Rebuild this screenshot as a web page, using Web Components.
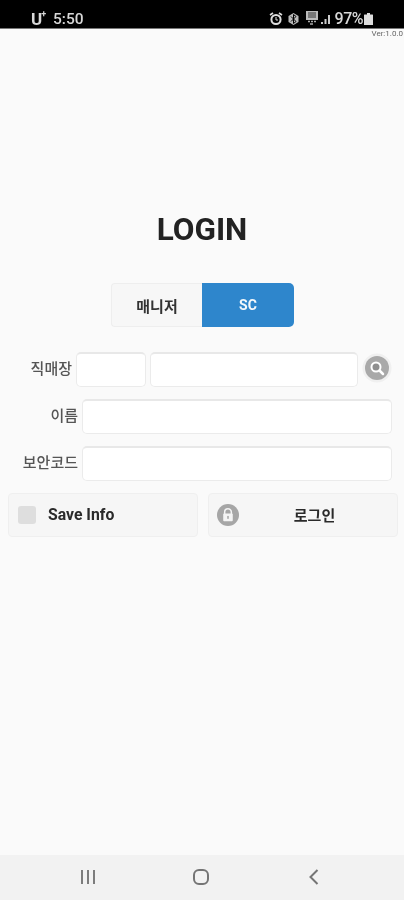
<!DOCTYPE html>
<html lang="ko">
<head>
<meta charset="utf-8">
<title>LOGIN</title>
<style>
html, body { margin: 0; height: 100%; }
body { background: #fafafa; font-family: Roboto, "Noto Sans CJK KR", sans-serif; }
#app { height: 900px; display: flex; flex-direction: column; overflow: hidden; }
</style>
</head>
<body>
<div id="app">
  <status-bar></status-bar>
  <login-page></login-page>
  <nav-bar></nav-bar>
</div>
<script>
const FONT = 'Roboto, "Noto Sans CJK KR", sans-serif';

class StatusBar extends HTMLElement {
  connectedCallback() {
    this.attachShadow({ mode: "open" }).innerHTML = `
    <style>
      :host { display: flex; flex: none; height: 29px; box-sizing: border-box; background: #000; color: #d8d8d8;
        align-items: center; padding: 9px 31px 0 31px; border-bottom: 1px solid #777; font-family: ${FONT}; filter: blur(.5px); }
      .carrier { font-size: 17px; font-weight: 700; width: 22px; letter-spacing: -1px; }
      .carrier sup { font-size: 9px; line-height: 0; position: relative; top: -1px; }
      .time { font-size: 15.5px; font-weight: 500; }
      .right { margin-left: auto; display: flex; align-items: center; }
      .pct { font-size: 16px; letter-spacing: -.5px; font-weight: 500; margin: 0 1px 0 4px; }
      .alarm { margin-right: 4px; }
      .bt { margin-right: 6px; }
      svg { display: block; }
    </style>
    <span class="carrier">U<sup>+</sup></span><span class="time">5:50</span>
    <div class="right">
      <svg class="alarm" width="14" height="14" viewBox="0 0 14 14"><circle cx="7" cy="7.500" r="4.600" fill="none" stroke="#ddd" stroke-width="2"/><path d="M1 3l3-2M13 3l-3-2" stroke="#ddd" stroke-width="1.600"/><path d="M7 5v3h2" stroke="#ddd" fill="none"/></svg>
      <svg class="bt" width="13" height="14" viewBox="0 0 13 14"><path d="M6.500 1l5 3v6l-5 3-5-3V4z" fill="#bbb"/><path d="M4 4.500l5 5-2.500 2v-9L9 4.500l-5 5" fill="none" stroke="#000"/></svg>
      <svg width="25" height="15" viewBox="0 0 25 15"><rect x="0" y="0" width="12" height="9" fill="#bbb"/><path d="M2 2h8M2 4h8M2 6h8" stroke="#333"/><path d="M2 10.500h2M5 10.500h2M8 10.500h2M4 13h3" stroke="#aaa" stroke-width="1.500"/><path d="M15 11h2v2h-2zM18.500 8h2v5h-2zM22 4h2v9h-2z" fill="#ccc"/></svg>
      <span class="pct">97%</span>
      <svg width="9" height="12" viewBox="0 0 9 12"><path d="M3 0h3v1.500H8.500a.5.500 0 0 1 .5.500v10H0V2a.5.500 0 0 1 .5-.500H3z" fill="#ddd"/></svg>
    </div>`;
  }
}

class SegmentToggle extends HTMLElement {
  connectedCallback() {
    this.attachShadow({ mode: "open" }).innerHTML = `
    <style>
      :host { display: flex; width: 183px; height: 44px; font: 700 15px ${FONT}; }
      div { flex: 1; display: flex; align-items: center; justify-content: center; box-sizing: border-box; }
      .off { flex: none; width: 91px; background: #f7f7f7; color: #333; border: 1px solid #eee; border-right: 0; border-radius: 4px 0 0 4px; }
      .on { background: #2e86cc; color: #f4f8fb; font-size: 14px; border-radius: 0 5px 5px 0; }
    </style>
    <div class="off">매니저</div><div class="on">SC</div>`;
  }
}

class FieldRow extends HTMLElement {
  connectedCallback() {
    this.attachShadow({ mode: "open" }).innerHTML = `
    <style>
      :host { display: flex; align-items: center; gap: 4px; color: #555; font: 500 15px ${FONT}; }
      label { flex: none; width: var(--label-width, 78px); text-align: right; white-space: nowrap; padding-bottom: 4px; }
    </style>
    <label>${this.getAttribute("label")}</label><slot></slot>`;
  }
}

class TextBox extends HTMLElement {
  connectedCallback() {
    this.attachShadow({ mode: "open" }).innerHTML = `
    <style>
      :host { display: block; flex: 1 1 0; min-width: 0; }
      input { display: block; box-sizing: border-box; width: 100%; height: 35px; margin: 0; padding: 0 8px;
        background: #fff; border: 1px solid #ebebeb; border-top: 2px solid #e8e8e8; border-radius: 5px; outline: 0; }
    </style>
    <input type="text">`;
  }
}

class ActionButton extends HTMLElement {
  connectedCallback() {
    this.attachShadow({ mode: "open" }).innerHTML = `
    <style>
      :host { display: flex; flex: 1 1 0; height: 44px; box-sizing: border-box; align-items: center;
        background: #f6f6f6; border: 1px solid #efefef; border-radius: 4px; color: #2a2a2a; font: 700 15px ${FONT}; padding: 0 9px; }
      ::slotted([slot=icon]) { flex: none; }
      .text { white-space: nowrap; padding-bottom: 2px; }
      :host([centered]) .text { flex: 1; text-align: center; padding-left: 2px; }
      :host(:not([centered])) .text { margin-left: 12px; font-size: 15.750px; }
    </style>
    <slot name="icon"></slot><span class="text"><slot></slot></span>`;
  }
}

class LoginPage extends HTMLElement {
  connectedCallback() {
    this.attachShadow({ mode: "open" }).innerHTML = `
    <style>
      :host { display: flex; flex-direction: column; flex: 1; min-height: 0; font-family: ${FONT}; filter: blur(.5px); }
      .ver { align-self: flex-end; margin: 1px 1px 0 0; height: 8px; font-size: 8px; line-height: 8px; color: #666; }
      h1 { margin: 174px 0 0; height: 36px; line-height: 36px; text-align: center; font-size: 31.500px; font-weight: 700; color: #222; }
      segment-toggle { margin: 35px 0 0 111px; }
      .fields { display: flex; flex-direction: column; margin: 25px 12px 0 0; }
      .fields field-row + field-row { margin-top: 12px; }
      .first { --label-width: 72px; }
      .first text-box:first-of-type { flex: none; width: 70px; }
      .search { flex: none; display: block; margin-bottom: 4px; }
      .actions { display: flex; gap: 10px; margin: 12px 6px 0 8px; }
      .check { margin-bottom: 1px; }
      .lock { margin-left: -1px; }
    </style>
    <div class="ver">Ver:1.0.0</div>
    <h1>LOGIN</h1>
    <segment-toggle></segment-toggle>
    <div class="fields">
      <field-row class="first" label="직매장">
        <text-box></text-box><text-box></text-box>
        <svg class="search" width="30" height="30" viewBox="0 0 30 30"><circle cx="15" cy="15" r="14.500" fill="#f0f0f0"/><circle cx="15" cy="15" r="12" fill="#a9a9a9"/><circle cx="14" cy="14" r="4.500" fill="#8f8f8f" stroke="#fff" stroke-width="2"/><path d="M17.500 17.500l3.500 3.500" stroke="#fff" stroke-width="2.500" stroke-linecap="round"/></svg>
      </field-row>
      <field-row label="이름"><text-box></text-box></field-row>
      <field-row label="보안코드"><text-box></text-box></field-row>
    </div>
    <div class="actions">
      <action-button>
        <svg class="check" slot="icon" width="18" height="18" viewBox="0 0 18 18"><rect width="18" height="18" rx="3" fill="#dedede"/></svg>
        Save Info
      </action-button>
      <action-button centered>
        <svg class="lock" slot="icon" width="22" height="22" viewBox="0 0 23 23"><circle cx="11.500" cy="11.500" r="11.500" fill="#a6a6a6"/><path d="M8 10.500V8.500a3.500 3.500 0 0 1 7 0v2" fill="none" stroke="#f4f4f4" stroke-width="1.600"/><rect x="6.500" y="10" width="10" height="8" rx="1" fill="#f4f4f4"/><rect x="10.700" y="12.500" width="1.600" height="3" fill="#a6a6a6"/></svg>
        로그인
      </action-button>
    </div>`;
  }
}

class NavBar extends HTMLElement {
  connectedCallback() {
    this.attachShadow({ mode: "open" }).innerHTML = `
    <style>
      :host { display: flex; flex: none; height: 45px; box-sizing: border-box; background: #f2f2f2; align-items: center; gap: 97px;
        padding: 0 0 1px 80px; filter: blur(.5px); }
      svg { display: block; }
      .back { margin-left: 3px; }
    </style>
    <svg width="16" height="16" viewBox="0 0 16 16"><path d="M2 1v14M8 1v14M14 1v14" stroke="#7d7d7d" stroke-width="2"/></svg>
    <svg width="16" height="16" viewBox="0 0 16 16"><rect x="1" y="1" width="14" height="14" rx="5" fill="none" stroke="#757575" stroke-width="2"/></svg>
    <svg class="back" width="10" height="16" viewBox="0 0 10 16"><path d="M8.500 1L1.500 8l7 7" fill="none" stroke="#757575" stroke-width="2"/></svg>`;
  }
}

customElements.define("status-bar", StatusBar);
customElements.define("segment-toggle", SegmentToggle);
customElements.define("field-row", FieldRow);
customElements.define("text-box", TextBox);
customElements.define("action-button", ActionButton);
customElements.define("login-page", LoginPage);
customElements.define("nav-bar", NavBar);
</script>
</body>
</html>
